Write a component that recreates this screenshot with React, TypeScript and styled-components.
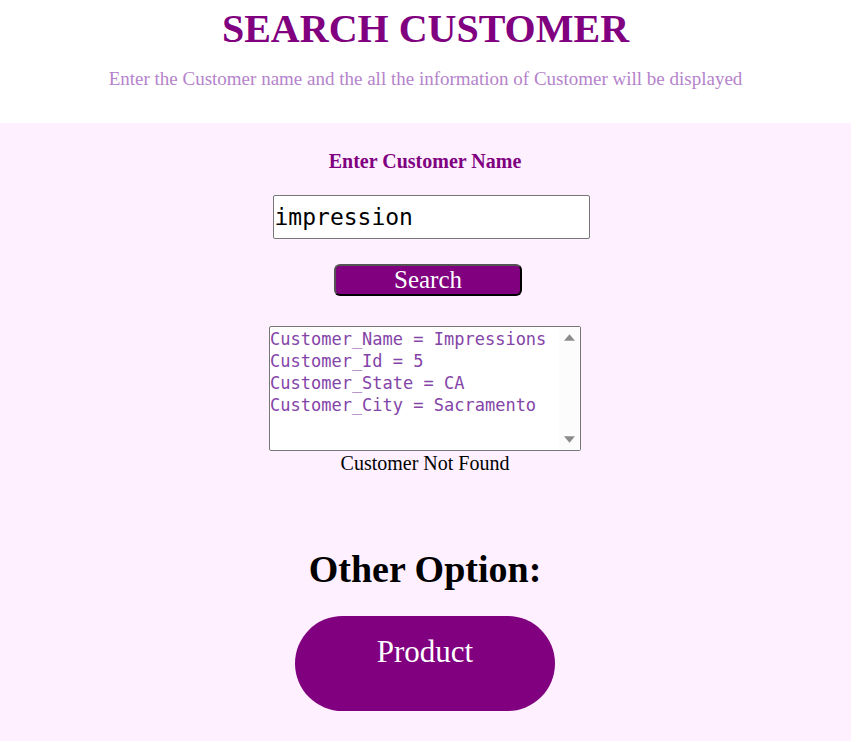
import React, { useState } from "react";
import styled, { createGlobalStyle } from "styled-components";

const GlobalStyle = createGlobalStyle`
  body {
    margin: 0;
    padding-right: 8px;
    background: #ffffff;
    font-family: "Liberation Serif", "Times New Roman", serif;
    font-size: 20px;
    line-height: 22px;
  }
`;

const Header = styled.header`
  padding: 4px 0 33px;
  text-align: center;
`;

const Title = styled.h1`
  margin: 0 0 15px;
  color: #800080;
  font-size: 40px;
  line-height: 49px;
`;

const Intro = styled.p`
  margin: 0;
  color: #b583cb;
  font-size: 19px;
`;

const Main = styled.main`
  display: flex;
  flex-direction: column;
  align-items: center;
  padding: 27px 1px 30px 0;
  background: #fef0ff;
`;

const SearchForm = styled.form`
  display: flex;
  flex-direction: column;
  align-items: center;
`;

const Label = styled.label`
  color: #800080;
  font-weight: bold;
`;

const NameInput = styled.input`
  box-sizing: border-box;
  width: 317px;
  height: 44px;
  margin: 23px 0 25px 12px;
  padding: 1px;
  border: 1px solid #767676;
  border-radius: 2px;
  background: #ffffff;
  color: #000000;
  font-family: "DejaVu Sans Mono", monospace;
  font-size: 23px;
`;

const SearchButton = styled.button`
  box-sizing: border-box;
  width: 188px;
  height: 32px;
  margin-left: 6px;
  padding: 0;
  border: 2px outset #000000;
  border-radius: 6px;
  background: #800080;
  color: #ffffff;
  font-family: inherit;
  font-size: 25px;
  line-height: 28px;
`;

const ResultBox = styled.div`
  position: relative;
  display: flex;
  width: 312px;
  margin-top: 30px;
`;

const Result = styled.textarea`
  box-sizing: border-box;
  width: 100%;
  height: 125px;
  margin: 0;
  padding: 1px 21px 0 0;
  overflow-y: auto;
  scrollbar-width: none;
  resize: none;
  border: 1px solid #767676;
  border-radius: 2px;
  background: #ffffff;
  color: #8444a8;
  font-family: "DejaVu Sans Mono", monospace;
  font-size: 17px;
  line-height: 22px;
`;

const ScrollTrack = styled.div`
  position: absolute;
  inset: 1px 1px 1px auto;
  display: flex;
  flex-direction: column;
  align-items: center;
  justify-content: space-between;
  box-sizing: border-box;
  width: 21px;
  padding: 7px 0;
  background: #fcfcfc;
`;

const Arrow = styled.svg`
  width: 11px;
  height: 7px;
  fill: #8b8b8b;
`;

const Status = styled.p`
  margin: 1px 0 73px;
`;

const OptionsTitle = styled.h2`
  margin: 0 0 25px;
  font-size: 38px;
  line-height: 44px;
`;

const OptionLink = styled.a`
  box-sizing: border-box;
  width: 260px;
  height: 95px;
  padding-top: 18px;
  border-radius: 48px;
  background: #800080;
  color: #ffffff;
  font-size: 31px;
  line-height: 36px;
  text-align: center;
  text-decoration: none;
`;

const customer = [
  "Customer_Name = Impressions",
  "Customer_Id = 5",
  "Customer_State = CA",
  "Customer_City = Sacramento",
].join("\n");

export default function App() {
  const [name, setName] = useState("impression");
  return (
    <>
      <GlobalStyle />
      <Header>
        <Title>SEARCH CUSTOMER</Title>
        <Intro>Enter the Customer name and the all the information of Customer will be displayed</Intro>
      </Header>
      <Main>
        <SearchForm onSubmit={(e: React.FormEvent) => e.preventDefault()}>
          <Label htmlFor="customer-name">Enter Customer Name</Label>
          <NameInput id="customer-name" value={name} onChange={(e) => setName(e.target.value)} />
          <SearchButton type="submit">Search</SearchButton>
        </SearchForm>
        <ResultBox>
          <Result aria-label="Customer information" readOnly value={customer} />
          <ScrollTrack aria-hidden="true">
            <Arrow viewBox="0 0 11 7">
              <path d="M5.5 0.3 11 6.7H0Z" />
            </Arrow>
            <Arrow viewBox="0 0 11 7">
              <path d="M5.5 6.7 0 0.3H11Z" />
            </Arrow>
          </ScrollTrack>
        </ResultBox>
        <Status>Customer Not Found</Status>
        <OptionsTitle>Other Option:</OptionsTitle>
        <OptionLink href="#product">Product</OptionLink>
      </Main>
    </>
  );
}
